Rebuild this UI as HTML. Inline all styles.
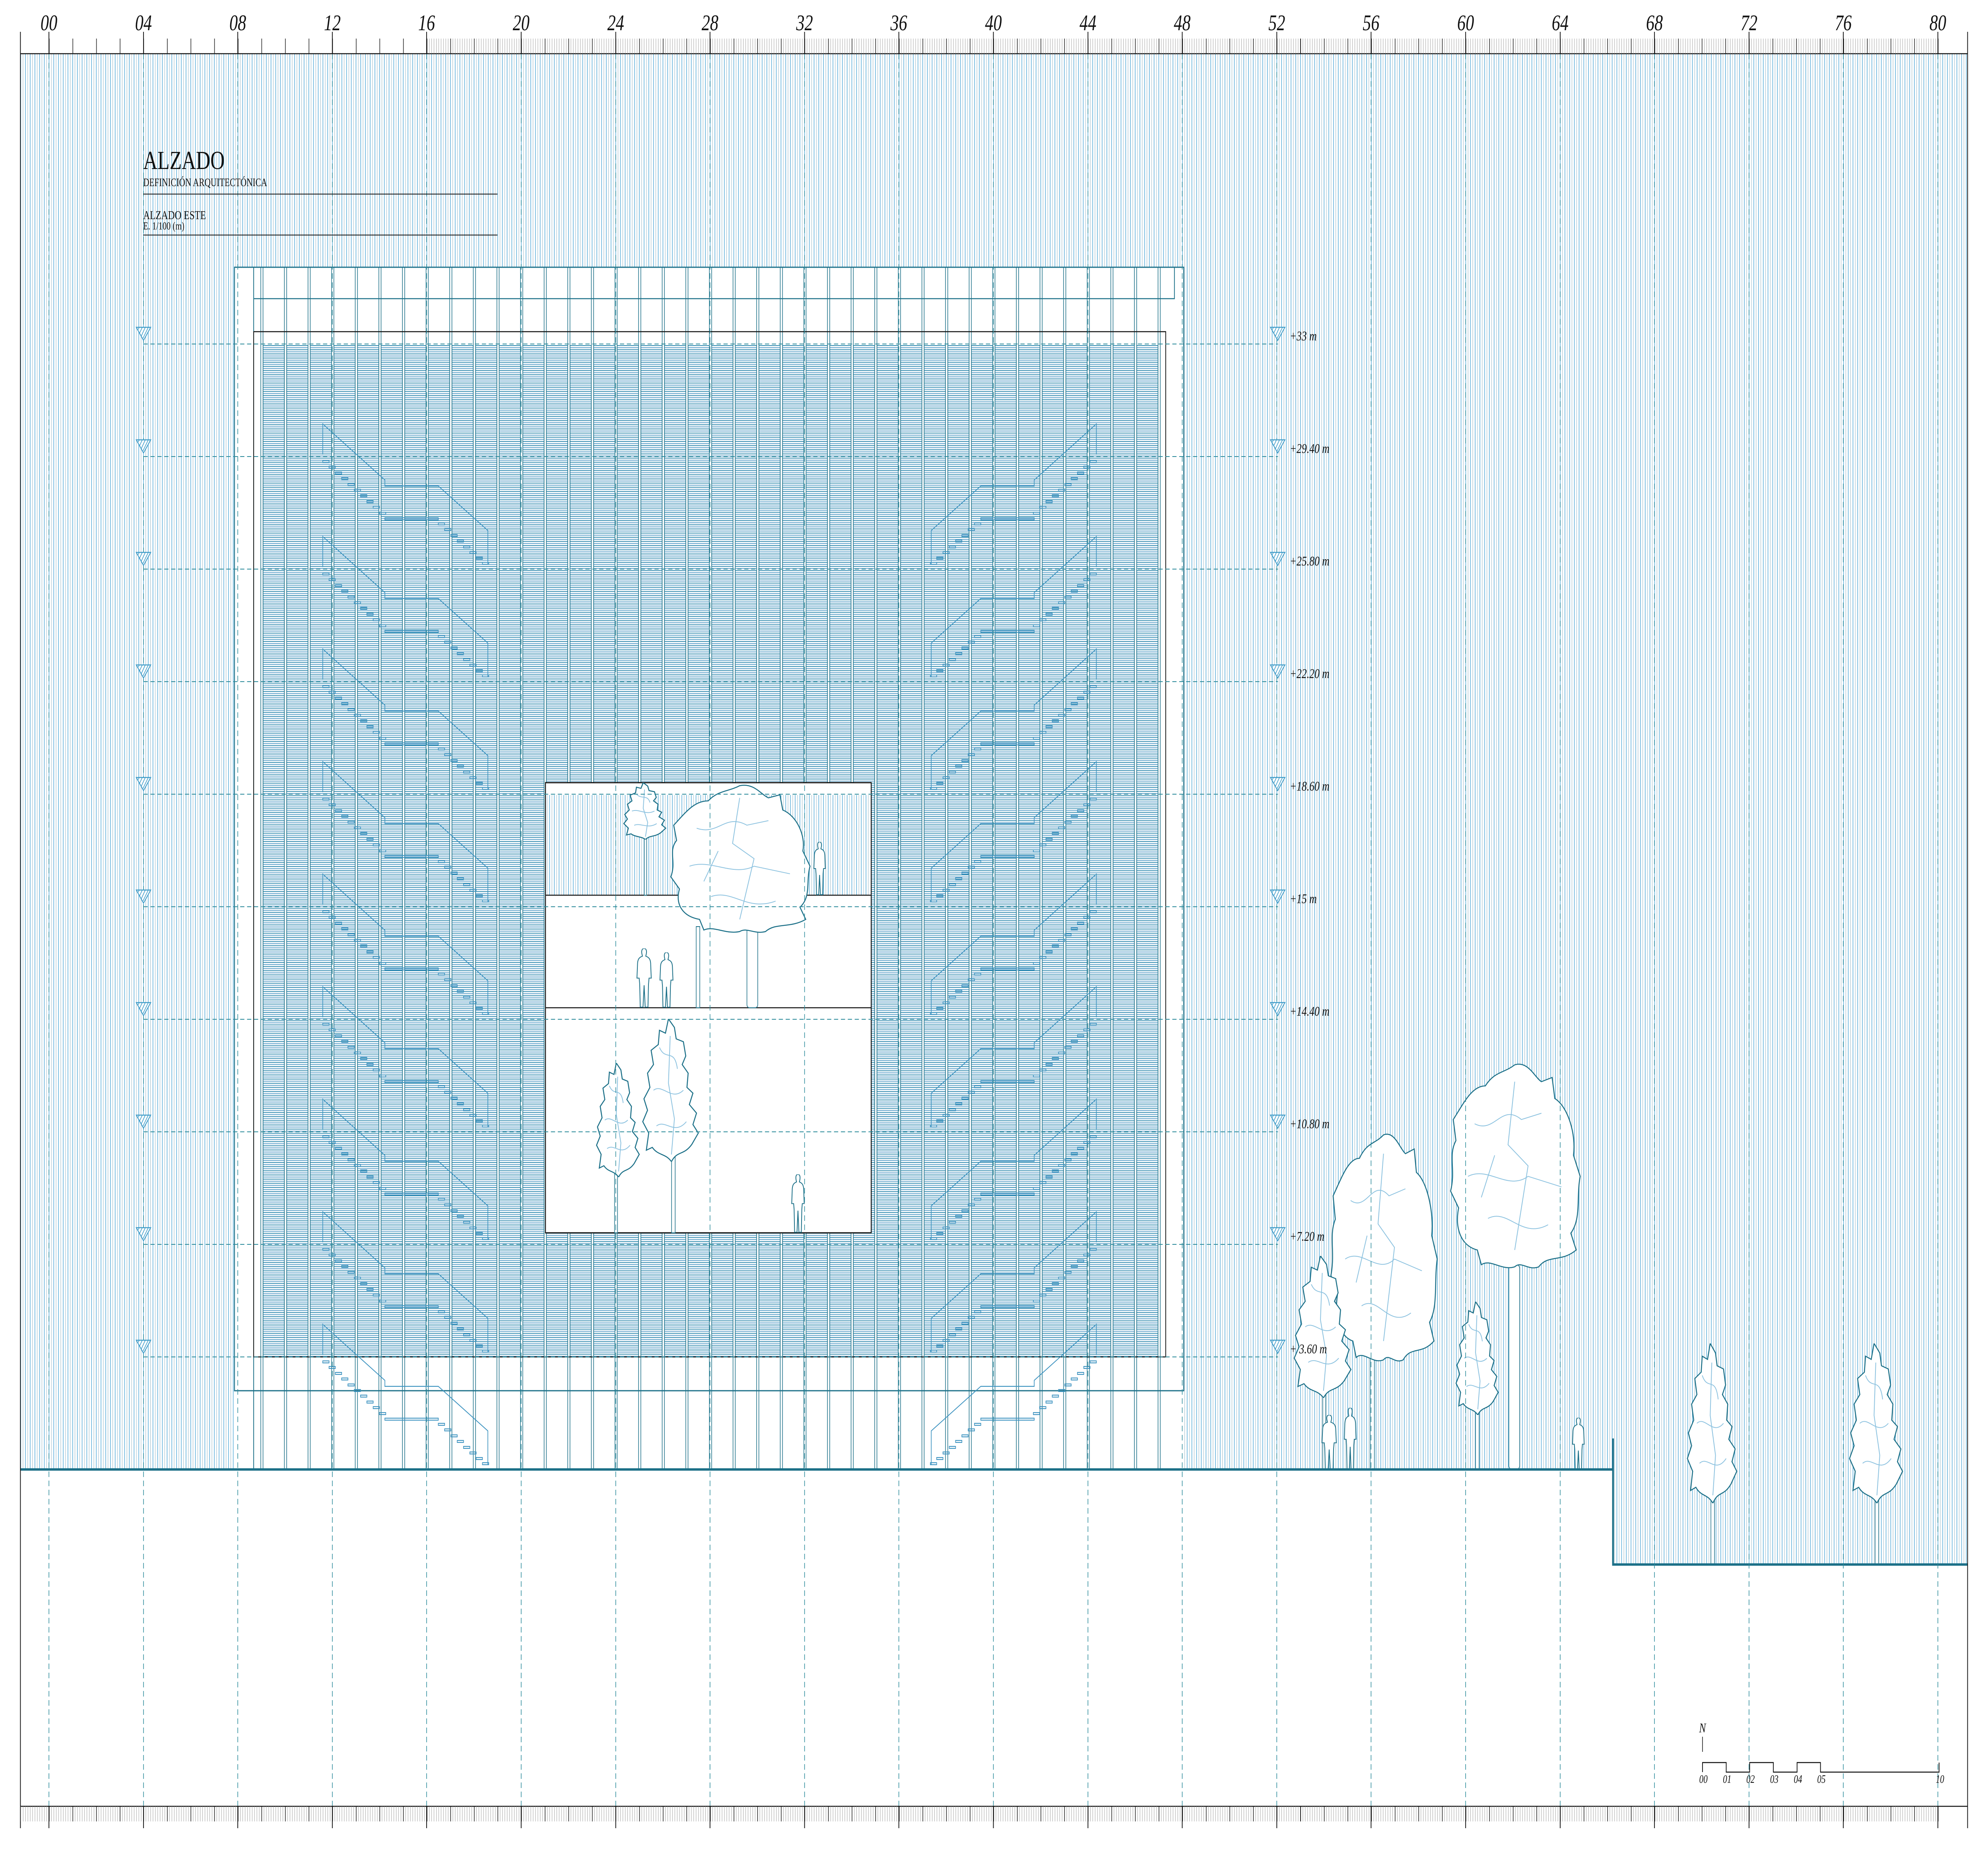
<!DOCTYPE html>
<html><head><meta charset="utf-8"><style>
html,body{margin:0;padding:0;background:#fff;width:100%;height:100%;overflow:hidden;}
svg{display:block;position:fixed;left:0;top:0;width:100vw;height:100vh;}
text{font-family:"Liberation Serif",serif;}
</style></head><body>
<svg viewBox="0 0 6622 4677" preserveAspectRatio="none" xmlns="http://www.w3.org/2000/svg">
<defs>
<pattern id="bg" patternUnits="userSpaceOnUse" x="68" y="0" width="15.73" height="20">
<rect x="0" y="0" width="2" height="20" fill="#58acd9"/>
<rect x="8" y="0" width="1.3" height="20" fill="#93b3c3"/>
</pattern>
<pattern id="slat" patternUnits="userSpaceOnUse" x="0" y="868" width="40" height="10.48">
<rect x="0" y="0" width="40" height="1.8" fill="#1b7ea6"/>
<rect x="0" y="5" width="40" height="2.4" fill="#72acd0"/>
</pattern>
<pattern id="mull" patternUnits="userSpaceOnUse" x="0" y="0" width="78.65" height="50">
<rect x="3.5" y="0" width="7" height="50" fill="#fff"/>
<rect x="2.5" y="0" width="2" height="50" fill="#1c7088"/>
<rect x="10" y="0" width="2" height="50" fill="#1c7088"/>
</pattern>
<pattern id="tick1" patternUnits="userSpaceOnUse" x="163" y="0" width="78.65" height="100">
<rect x="0" y="0" width="2" height="100" fill="#222"/>
</pattern>
<pattern id="tickf" patternUnits="userSpaceOnUse" x="163" y="0" width="7.865" height="100">
<rect x="0" y="0" width="1.2" height="100" fill="#999"/>
</pattern>
<symbol id="crownA" viewBox="0 0 100 100" preserveAspectRatio="none">
<path vector-effect="non-scaling-stroke" fill="#fff" stroke="#1c7088" stroke-width="2.5" d="M50 2 C60 0 65 8 70 10 L78 8 L80 18 C90 22 96 35 94 45 L99 55 C96 65 100 75 92 82 L96 90 C85 96 75 92 68 98 C60 100 55 95 50 98 C40 100 32 94 25 97 L22 90 C10 88 5 80 8 70 L2 62 C6 52 0 45 6 38 L4 28 C12 20 18 12 28 12 C35 5 42 6 50 2 Z"/>
<path vector-effect="non-scaling-stroke" fill="none" stroke="#8ec3e0" stroke-width="2" d="M20 30 C35 35 40 20 55 28 L70 25 M15 55 C30 50 45 62 60 55 L85 60 M30 75 C45 70 55 85 75 78 M50 10 L45 40 L60 50 L50 90 M35 45 L25 65"/>
</symbol>
<symbol id="crownB" viewBox="0 0 100 100" preserveAspectRatio="none">
<path vector-effect="non-scaling-stroke" fill="#fff" stroke="#1c7088" stroke-width="2.5" d="M45 0 L55 6 L58 14 L70 16 L74 26 L68 32 L78 38 L76 48 L86 52 L80 60 L92 66 L86 74 L95 80 L84 88 C70 96 60 92 50 100 C40 94 28 96 18 90 L8 92 L12 80 L2 72 L10 64 L4 56 L14 48 L10 38 L20 32 L16 22 L28 18 L30 8 L40 10 Z"/>
<path vector-effect="non-scaling-stroke" fill="none" stroke="#8ec3e0" stroke-width="2" d="M30 20 C40 30 55 20 60 35 M20 50 C35 45 50 58 70 50 M25 75 C40 70 55 82 75 72 M48 12 L45 45 L55 70 L50 95"/>
</symbol>
<symbol id="person" viewBox="0 0 30 100" preserveAspectRatio="none">
<path vector-effect="non-scaling-stroke" fill="#fff" stroke="#1c7088" stroke-width="2" d="M15 0 C19 0 20 4 19 9 L18 13 C24 15 27 18 27 28 L28 50 L24 50 L23 60 L22 99 L17 99 L15 62 L13 99 L8 99 L7 60 L6 50 L2 50 L3 28 C3 18 6 15 12 13 L11 9 C10 4 11 0 15 0 Z"/>
</symbol>
<g id="stair" fill="none" stroke="#3d93c0" stroke-width="2.2">
<path d="M0,-5 L0,-82 L207,59 L207,74 L385,74 L550,186 L550,271"/>
<rect x="0" y="10" width="21" height="5"/><rect x="21" y="24" width="21" height="5"/><rect x="42" y="39" width="21" height="5"/><rect x="63" y="53" width="21" height="5"/><rect x="84" y="68" width="21" height="5"/><rect x="105" y="82" width="21" height="5"/><rect x="126" y="96" width="21" height="5"/><rect x="147" y="111" width="21" height="5"/><rect x="168" y="125" width="21" height="5"/><rect x="189" y="140" width="21" height="5"/>
<rect x="207" y="154" width="178" height="5"/>
<rect x="385" y="167" width="21" height="5"/><rect x="406" y="181" width="21" height="5"/><rect x="427" y="196" width="21" height="5"/><rect x="448" y="210" width="21" height="5"/><rect x="469" y="225" width="21" height="5"/><rect x="490" y="239" width="21" height="5"/><rect x="511" y="253" width="21" height="5"/><rect x="532" y="266" width="21" height="5"/>
</g>
<g id="tri"><path d="M-24,-33 L24,-33 L0,0 Z" fill="#fff" stroke="#3d9bc8" stroke-width="2.5"/><path d="M-14,-33 L-20,-25 M-4,-33 L-14,-17 M6,-33 L-8,-10 M16,-33 L-2,-5" stroke="#3d9bc8" stroke-width="2"/></g>
</defs>

<rect x="68" y="135" width="5305" height="3560" fill="url(#bg)"/>
<rect x="5373" y="135" width="1181" height="3799" fill="url(#bg)"/>

<rect x="781" y="672" width="3162" height="3023" fill="#fff"/>
<rect x="845" y="672" width="3040" height="3023" fill="url(#mull)"/>
<rect x="870" y="868" width="2987" height="2544" fill="url(#slat)"/>
<rect x="870" y="868" width="2987" height="2544" fill="url(#mull)"/>
<rect x="781" y="672" width="3162" height="2825" fill="none" stroke="#1c7088" stroke-width="3"/>
<path d="M845 751 L3912 751 L3912 672 M845 672 L845 3695 M3943 672 L3943 3497" fill="none" stroke="#1c7088" stroke-width="2.5"/>
<rect x="845" y="834" width="3038" height="2578" fill="none" stroke="#111" stroke-width="2.5"/>

<g>
<use href="#stair" transform="translate(1075,1148)"/><use href="#stair" transform="translate(1075,1431)"/><use href="#stair" transform="translate(1075,1714)"/><use href="#stair" transform="translate(1075,1997)"/><use href="#stair" transform="translate(1075,2280)"/><use href="#stair" transform="translate(1075,2563)"/><use href="#stair" transform="translate(1075,2846)"/><use href="#stair" transform="translate(1075,3129)"/><use href="#stair" transform="translate(1075,3412)"/>
<use href="#stair" transform="translate(3652,1148) scale(-1,1)"/><use href="#stair" transform="translate(3652,1431) scale(-1,1)"/><use href="#stair" transform="translate(3652,1714) scale(-1,1)"/><use href="#stair" transform="translate(3652,1997) scale(-1,1)"/><use href="#stair" transform="translate(3652,2280) scale(-1,1)"/><use href="#stair" transform="translate(3652,2563) scale(-1,1)"/><use href="#stair" transform="translate(3652,2846) scale(-1,1)"/><use href="#stair" transform="translate(3652,3129) scale(-1,1)"/><use href="#stair" transform="translate(3652,3412) scale(-1,1)"/>
</g>

<rect x="1817" y="1968" width="1085" height="1132" fill="#fff"/>
<rect x="1822" y="1999" width="1075" height="252" fill="url(#bg)"/>
<path d="M1817 2251 L2902 2251 M1817 2534 L2902 2534" stroke="#111" stroke-width="2.5"/>
<rect x="1817" y="1968" width="1085" height="1132" fill="none" stroke="#111" stroke-width="3"/>
<rect x="2146" y="2100" width="8" height="151" fill="#fff" stroke="#1c7088" stroke-width="2"/>
<use href="#crownB" x="2075" y="1968" width="150" height="143"/>
<rect x="2319" y="2330" width="12" height="204" fill="#fff" stroke="#1c7088" stroke-width="2"/>
<rect x="2488" y="2240" width="36" height="294" rx="8" fill="#fff" stroke="#1c7088" stroke-width="2"/>
<use href="#crownA" x="2225" y="1968" width="478" height="382"/>
<rect x="2047" y="2940" width="10" height="160" fill="#fff" stroke="#1c7088" stroke-width="2"/>
<use href="#crownB" x="1984" y="2673" width="153" height="287"/>
<rect x="2237" y="2900" width="12" height="200" fill="#fff" stroke="#1c7088" stroke-width="2"/>
<use href="#crownB" x="2137" y="2562" width="199" height="359"/>
<use href="#person" x="2118" y="2385" width="55" height="149"/>
<use href="#person" x="2195" y="2395" width="50" height="139"/>
<use href="#person" x="2708" y="2117" width="44" height="134"/>
<use href="#person" x="2634" y="2953" width="48" height="147"/>

<rect x="4564" y="3400" width="14" height="295" fill="#fff" stroke="#1c7088" stroke-width="2"/>
<rect x="4406" y="3490" width="10" height="205" fill="#fff" stroke="#1c7088" stroke-width="2"/>
<use href="#crownA" x="4426" y="2842" width="365" height="589"/>
<use href="#crownB" x="4307" y="3158" width="203" height="357"/>
<rect x="5026" y="3180" width="36" height="515" rx="10" fill="#fff" stroke="#1c7088" stroke-width="2"/>
<use href="#crownA" x="4823" y="2667" width="445" height="529"/>
<rect x="4915" y="3540" width="12" height="155" fill="#fff" stroke="#1c7088" stroke-width="2"/>
<use href="#crownB" x="4847" y="3273" width="151" height="285"/>
<rect x="5699" y="3760" width="12" height="174" fill="#fff" stroke="#1c7088" stroke-width="2"/>
<use href="#crownB" x="5617" y="3378" width="177" height="402"/>
<rect x="6246" y="3760" width="12" height="174" fill="#fff" stroke="#1c7088" stroke-width="2"/>
<use href="#crownB" x="6157" y="3378" width="190" height="402"/>
<use href="#person" x="4400" y="3558" width="55" height="140"/>
<use href="#person" x="4475" y="3540" width="45" height="158"/>
<use href="#person" x="5235" y="3565" width="45" height="133"/>

<path d="M68 3695 L5373 3695 L5373 3617 M5373 3695 L5373 3934 L6554 3934" fill="none" stroke="#1c7088" stroke-width="6"/>

<g stroke="#2a8a9a" stroke-width="2" stroke-dasharray="14 9">
<path d="M163 135V4542M478 135V4542M792 135V4542M1107 135V4542M1421 135V4542M1736 135V4542M2051 135V4542M2365 135V4542M2680 135V4542M2994 135V4542M3309 135V4542M3624 135V4542M3938 135V4542M4253 135V4542M4567 135V4542M4882 135V4542M5197 135V4542M5511 135V4542M5826 135V4542M6140 135V4542M6455 135V4542"/>
<path d="M478 865H4257M478 1148H4257M478 1431H4257M478 1714H4257M478 1997H4257M478 2280H4257M478 2563H4257M478 2846H4257M478 3129H4257M478 3412H4257"/>
</g>
<g>
<use href="#tri" transform="translate(478,856)"/><use href="#tri" transform="translate(478,1139)"/><use href="#tri" transform="translate(478,1422)"/><use href="#tri" transform="translate(478,1705)"/><use href="#tri" transform="translate(478,1988)"/><use href="#tri" transform="translate(478,2271)"/><use href="#tri" transform="translate(478,2554)"/><use href="#tri" transform="translate(478,2837)"/><use href="#tri" transform="translate(478,3120)"/><use href="#tri" transform="translate(478,3403)"/>
<use href="#tri" transform="translate(4256,856)"/><use href="#tri" transform="translate(4256,1139)"/><use href="#tri" transform="translate(4256,1422)"/><use href="#tri" transform="translate(4256,1705)"/><use href="#tri" transform="translate(4256,1988)"/><use href="#tri" transform="translate(4256,2271)"/><use href="#tri" transform="translate(4256,2554)"/><use href="#tri" transform="translate(4256,2837)"/><use href="#tri" transform="translate(4256,3120)"/><use href="#tri" transform="translate(4256,3403)"/>
</g>
<g font-style="italic" font-size="34" fill="#111">
<text x="4296" y="856">+33 m</text><text x="4296" y="1139">+29.40 m</text><text x="4296" y="1422">+25.80 m</text><text x="4296" y="1705">+22.20 m</text><text x="4296" y="1988">+18.60 m</text><text x="4296" y="2271">+15 m</text><text x="4296" y="2554">+14.40 m</text><text x="4296" y="2837">+10.80 m</text><text x="4296" y="3120">+7.20 m</text><text x="4296" y="3403">+ 3.60 m</text>
</g>

<rect x="0" y="0" width="6622" height="135" fill="#fff"/>
<path d="M68 80 V4597 M6554 80 V4597 M68 135 H6554 M68 4542 H6554" stroke="#111" stroke-width="2.5" fill="none"/>
<rect x="163" y="97" width="1260" height="38" fill="url(#tick1)"/>
<rect x="1421" y="97" width="5040" height="38" fill="url(#tickf)"/>
<rect x="1421" y="97" width="5040" height="38" fill="url(#tick1)"/>
<rect x="68" y="4542" width="6393" height="38" fill="url(#tickf)"/>
<rect x="163" y="4542" width="6300" height="38" fill="url(#tick1)"/>
<path stroke="#111" stroke-width="2.5" d="M163 80V135M478 80V135M792 80V135M1107 80V135M1421 80V135M1736 80V135M2051 80V135M2365 80V135M2680 80V135M2994 80V135M3309 80V135M3624 80V135M3938 80V135M4253 80V135M4567 80V135M4882 80V135M5197 80V135M5511 80V135M5826 80V135M6140 80V135M6455 80V135 M163 4542V4597M478 4542V4597M792 4542V4597M1107 4542V4597M1421 4542V4597M1736 4542V4597M2051 4542V4597M2365 4542V4597M2680 4542V4597M2994 4542V4597M3309 4542V4597M3624 4542V4597M3938 4542V4597M4253 4542V4597M4567 4542V4597M4882 4542V4597M5197 4542V4597M5511 4542V4597M5826 4542V4597M6140 4542V4597M6455 4542V4597"/>
<g font-style="italic" font-size="56" fill="#111" text-anchor="middle">
<text x="163" y="76">00</text><text x="478" y="76">04</text><text x="792" y="76">08</text><text x="1107" y="76">12</text><text x="1421" y="76">16</text><text x="1736" y="76">20</text><text x="2051" y="76">24</text><text x="2365" y="76">28</text><text x="2680" y="76">32</text><text x="2994" y="76">36</text><text x="3309" y="76">40</text><text x="3624" y="76">44</text><text x="3938" y="76">48</text><text x="4253" y="76">52</text><text x="4567" y="76">56</text><text x="4882" y="76">60</text><text x="5197" y="76">64</text><text x="5511" y="76">68</text><text x="5826" y="76">72</text><text x="6140" y="76">76</text><text x="6455" y="76">80</text>
</g>

<text x="477" y="425" font-size="66" fill="#111">ALZADO</text>
<text x="477" y="468" font-size="28" fill="#111">DEFINICIÓN ARQUITECTÓNICA</text>
<path d="M477 488H1657 M477 591H1657" stroke="#111" stroke-width="2"/>
<text x="477" y="551" font-size="31" fill="#111">ALZADO ESTE</text>
<text x="477" y="577" font-size="27" fill="#111">E. 1/100 (m)</text>

<text x="5671" y="4356" font-size="34" font-style="italic" text-anchor="middle" fill="#111">N</text>
<path d="M5671 4367V4405" stroke="#111" stroke-width="2"/>
<path d="M5671 4456 V4432 H5750 V4456 H5828 V4432 H5907 V4456 H5986 V4432 H6064 V4456 H6459 V4432" fill="none" stroke="#111" stroke-width="2.5"/>
<g font-style="italic" font-size="28" fill="#111" text-anchor="middle">
<text x="5674" y="4483">00</text><text x="5753" y="4483">01</text><text x="5831" y="4483">02</text><text x="5910" y="4483">03</text><text x="5989" y="4483">04</text><text x="6067" y="4483">05</text><text x="6462" y="4483">10</text>
</g>
</svg>
</body></html>
